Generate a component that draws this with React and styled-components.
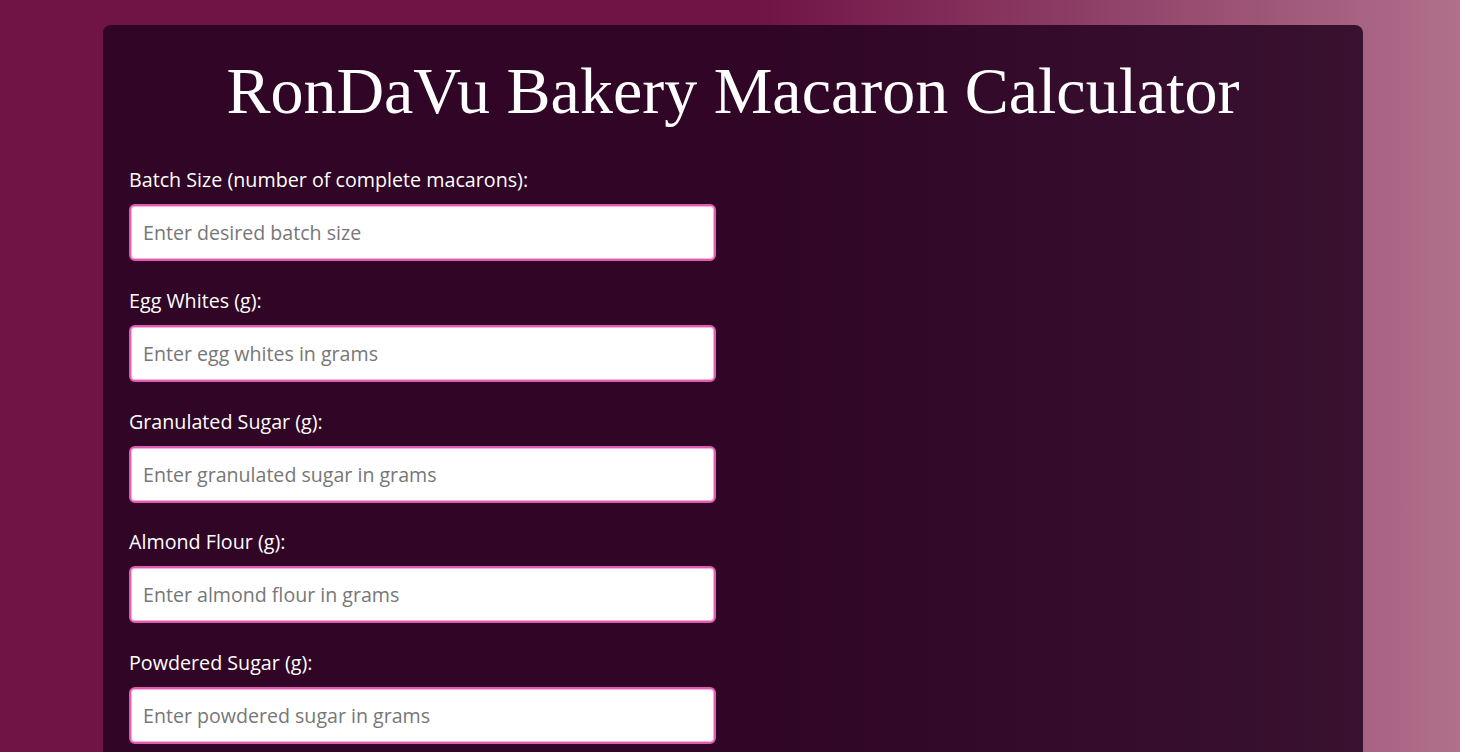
import styled, { createGlobalStyle } from 'styled-components';

const GlobalStyle = createGlobalStyle`
    html, body {
        margin: 0;
        min-height: 100%;
    }
    body {
        background: linear-gradient(to right, #701446 0%, #701446 52%, #b0708b 100%);
        background-attachment: fixed;
        font-family: "Open Sans", "Noto Sans", sans-serif;
    }
`

const Page = styled.div`
    padding: 25px 97px 40px 103px;
    min-height: 100vh;
    box-sizing: border-box;
`

const Card = styled.main`
    background: rgba(36, 2, 32, 0.84);
    border-radius: 8px;
    padding: 30px 26px 40px;
`

const Title = styled.h1`
    margin: 0 0 41px;
    font-family: "Liberation Serif", "Times New Roman", serif;
    font-weight: 400;
    font-size: 66px;
    line-height: 72px;
    text-align: center;
    color: #ffffff;
`

const Field = styled.div`
    display: flex;
    flex-direction: column;
    margin-bottom: 27.75px;
`

const Label = styled.label`
    font-size: 19.7px;
    line-height: 24px;
    color: #ffffff;
    margin-bottom: 12px;
`

const Input = styled.input`
    box-sizing: border-box;
    width: 587px;
    height: 57px;
    padding: 0 12px;
    border: 2px solid #df5cb1;
    border-radius: 6px;
    box-shadow: inset 0 0 0 1px #f6b3df;
    background: #ffffff;
    font-family: inherit;
    font-size: 19.6px;
    color: #333;
    outline: none;

    &::placeholder {
        color: #777777;
    }
`

const fields = [
    { id: 'batch', label: 'Batch Size (number of complete macarons):', placeholder: 'Enter desired batch size' },
    { id: 'eggWhites', label: 'Egg Whites (g):', placeholder: 'Enter egg whites in grams' },
    { id: 'granulated', label: 'Granulated Sugar (g):', placeholder: 'Enter granulated sugar in grams' },
    { id: 'almond', label: 'Almond Flour (g):', placeholder: 'Enter almond flour in grams' },
    { id: 'powdered', label: 'Powdered Sugar (g):', placeholder: 'Enter powdered sugar in grams' },
]

export default function App() {
    return (
        <>
            <GlobalStyle />
            <Page>
                <Card>
                    <Title>RonDaVu Bakery Macaron Calculator</Title>
                    {fields.map(f => (
                        <Field key={f.id}>
                            <Label htmlFor={f.id}>{f.label}</Label>
                            <Input id={f.id} type="number" placeholder={f.placeholder} />
                        </Field>
                    ))}
                </Card>
            </Page>
        </>
    )
}
